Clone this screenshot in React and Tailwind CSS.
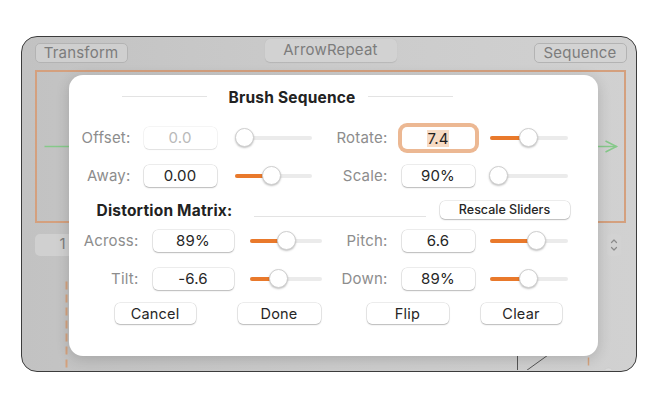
import React from 'react';

const font = "font-['Inter','Noto_Sans',sans-serif]";

function Slider({ className, value }) {
  return (
    <div className={`relative h-[20px] ${className}`}>
      <div className="absolute inset-x-0 top-[8px] h-[4px] rounded-full bg-[#ebebeb]" />
      {value > 12 && (
        <div className="absolute left-0 top-[8px] h-[4px] rounded-full bg-[#e9792b]" style={{ width: value }} />
      )}
      <div
        className="absolute top-[0.5px] -ml-[9.5px] size-[19px] rounded-full bg-white border-[0.5px] border-[#cfcfcf] shadow-[0_1px_2px_rgba(0,0,0,0.25)]"
        style={{ left: value }}
      />
    </div>
  );
}

function Field({ value, className = 'w-[73px]', disabled, focused }) {
  return (
    <div
      className={`h-[22px] pt-[2px] rounded-[5px] bg-white flex items-center justify-center text-[15px] tracking-[0.2px] ${
        focused
          ? 'ring-[4px] ring-[#ecb893] text-[#1f1f1f]'
          : disabled
          ? 'shadow-[0_0_0_0.5px_rgba(0,0,0,0.08),0_1px_1px_rgba(0,0,0,0.08)] text-[#b9b9b9]'
          : 'shadow-[0_0_0_0.5px_rgba(0,0,0,0.14),0_1px_1.5px_rgba(0,0,0,0.22)] text-[#262626]'
      } ${className}`}
    >
      {focused ? <span className="bg-[#f7dbc4] leading-[17px]">{value}</span> : value}
    </div>
  );
}

function Label({ children, className }) {
  return <div className={`pt-[2px] text-right text-[15px] tracking-[0.2px] text-[#8d8d8d] ${className}`}>{children}</div>;
}

function Button({ children, className, small }) {
  return (
    <div
      className={`flex items-center justify-center pt-[2px] rounded-[5px] bg-white shadow-[0_0_0_0.5px_rgba(0,0,0,0.14),0_1px_1.5px_rgba(0,0,0,0.22)] text-[#262626] ${
        small ? 'h-[18px] text-[12.5px] font-medium text-[#333]' : 'h-[21px] text-[14.5px] tracking-[0.2px]'
      } ${className}`}
    >
      {children}
    </div>
  );
}

function TopRow({ l1, f1, s1, l2, f2, s2 }) {
  return (
    <div className="flex items-center h-[22px]">
      <Label className="w-[62px]">{l1}</Label>
      <Field {...f1} className="ml-[13px] w-[73px]" />
      <Slider className="ml-[18px] w-[77px]" value={s1} />
      <Label className="w-[76px]">{l2}</Label>
      <Field {...f2} className="ml-[14px] w-[73px]" />
      <Slider className="ml-[15px] w-[78px]" value={s2} />
    </div>
  );
}

function BottomRow({ l1, v1, s1, l2, v2, s2 }) {
  return (
    <div className="flex items-center h-[22px]">
      <Label className="w-[70px]">{l1}</Label>
      <Field value={v1} className="ml-[14px] w-[81px]" />
      <Slider className="ml-[16px] w-[72px]" value={s1} />
      <Label className="w-[66px]">{l2}</Label>
      <Field value={v2} className="ml-[14px] w-[73px]" />
      <Slider className="ml-[15px] w-[78px]" value={s2} />
    </div>
  );
}

function Sheet() {
  return (
    <div className="absolute left-[46.5px] top-[37.5px] z-10 w-[529px] h-[281px] rounded-[14px] bg-white shadow-[0_3px_14px_rgba(0,0,0,0.16)] pt-[12px]">
      <div className="flex items-center h-[20px] pl-[53px]">
        <div className="w-[85px] h-px bg-[#e3e3e3]" />
        <div className="ml-[22px] w-[139px] pt-[3px] text-[15.5px] tracking-[0.2px] font-bold text-[#222]">Brush Sequence</div>
        <div className="w-[85px] h-px bg-[#e3e3e3]" />
      </div>

      <div className="mt-[20px]">
        <TopRow
          l1="Offset:"
          f1={{ value: '0.0', disabled: true }}
          s1={10}
          l2="Rotate:"
          f2={{ value: '7.4', focused: true }}
          s2={39}
        />
      </div>
      <div className="mt-[16px]">
        <TopRow
          l1="Away:"
          f1={{ value: '0.00' }}
          s1={37}
          l2="Scale:"
          f2={{ value: '90%' }}
          s2={9}
        />
      </div>

      <div className="mt-[14px] flex h-[18px] items-center">
        <div className="pl-[28px] pt-[2px] w-[185px] text-[15.5px] tracking-[0.2px] font-bold text-[#222]">Distortion Matrix:</div>
        <div className="self-start mt-[15px] w-[172px] h-px bg-[#e3e3e3]" />
        <Button small className="ml-[14px] w-[130px]">Rescale Sliders</Button>
      </div>

      <div className="mt-[11px]">
        <BottomRow l1="Across:" v1="89%" s1={37} l2="Pitch:" v2="6.6" s2={47} />
      </div>
      <div className="mt-[16px]">
        <BottomRow l1="Tilt:" v1="-6.6" s1={29} l2="Down:" v2="89%" s2={39} />
      </div>

      <div className="mt-[13px] flex pl-[46px]">
        <Button className="w-[81px]">Cancel</Button>
        <Button className="ml-[42px] w-[83px]">Done</Button>
        <Button className="ml-[46px] w-[82px]">Flip</Button>
        <Button className="ml-[32px] w-[81px]">Clear</Button>
      </div>
    </div>
  );
}

function Canvas() {
  return (
    <svg className="absolute inset-0" width="613" height="333" viewBox="0 0 613 333" fill="none">
      <path d="M22.5 109.5 H594.5" stroke="#86c98a" strokeWidth="1.5" />
      <path d="M583.5 104 L594.5 109.5 L583.5 115" stroke="#86c98a" strokeWidth="1.5" />
      <path d="M44.5 244.5 V335" stroke="#d4a27e" strokeWidth="2" strokeDasharray="8 5" />
      <path d="M495.5 300 V335" stroke="#555" strokeWidth="1" />
      <path d="M504.5 333.5 L540 308" stroke="#555" strokeWidth="1" />
      <path d="M566.5 320.5 V328.5" stroke="#d4a27e" strokeWidth="1.5" />
      <circle cx="586.5" cy="336" r="5" fill="#dadada" stroke="#c6c6c6" strokeWidth="0.5" />
    </svg>
  );
}

export default function App() {
  return (
    <div className={`w-[660px] h-[400px] bg-white pt-[36px] pl-[21px] ${font}`}>
      <div className="relative w-[616px] h-[336px] rounded-[16px] border-[1.5px] border-[#3c3c3c] overflow-hidden bg-linear-to-r from-[#c2c2c2] via-[#cbcbcb] to-[#d1d1d1]">
        <Canvas />
        <div className="relative pl-[12.5px]">
          <div className="flex items-start h-[26px]">
            <div className="mt-[5.5px] w-[93px] h-[20px] pt-[1px] rounded-[5px] border border-[#b3b3b3] bg-[#cfcfcf] flex items-center justify-center text-[15px] tracking-[0.2px] text-[#7c7c7c]">
              Transform
            </div>
            <div className="ml-[137px] mt-[1.5px] w-[132px] h-[23px] rounded-[5px] bg-[#d2d2d2] shadow-[0_0.5px_1px_rgba(0,0,0,0.1)] flex items-center justify-center text-[15px] tracking-[0.2px] text-[#7c7c7c]">
              ArrowRepeat
            </div>
            <div className="ml-[137px] mt-[5.5px] w-[93px] h-[20px] pt-[1px] rounded-[5px] border border-[#b3b3b3] bg-[#d3d3d3] flex items-center justify-center text-[15px] tracking-[0.2px] text-[#7c7c7c]">
              Sequence
            </div>
          </div>
          <div className="mt-[6.5px] w-[591px] h-[153px] border-2 border-[#d4a07e]" />
          <div className="mt-[11px] flex items-center h-[22px]">
            <div className="w-[90px] h-[22px] rounded-[5px] bg-[#d0d0d0] pl-[25px] flex items-center text-[15px] text-[#7c7c7c]">
              1
            </div>
            <div className="ml-[482px] w-[14px] h-[22px] rounded-[4px] bg-[#d2d2d2] flex flex-col items-center justify-center text-[#8a8a8a]">
              <svg width="8" height="16" viewBox="0 0 8 16" fill="none" stroke="currentColor" strokeWidth="1.2" strokeLinecap="round" strokeLinejoin="round">
                <path d="M1.5 5.5 L4 3 L6.5 5.5" />
                <path d="M1.5 10.5 L4 13 L6.5 10.5" />
              </svg>
            </div>
          </div>
        </div>
        <Sheet />
      </div>
    </div>
  );
}
